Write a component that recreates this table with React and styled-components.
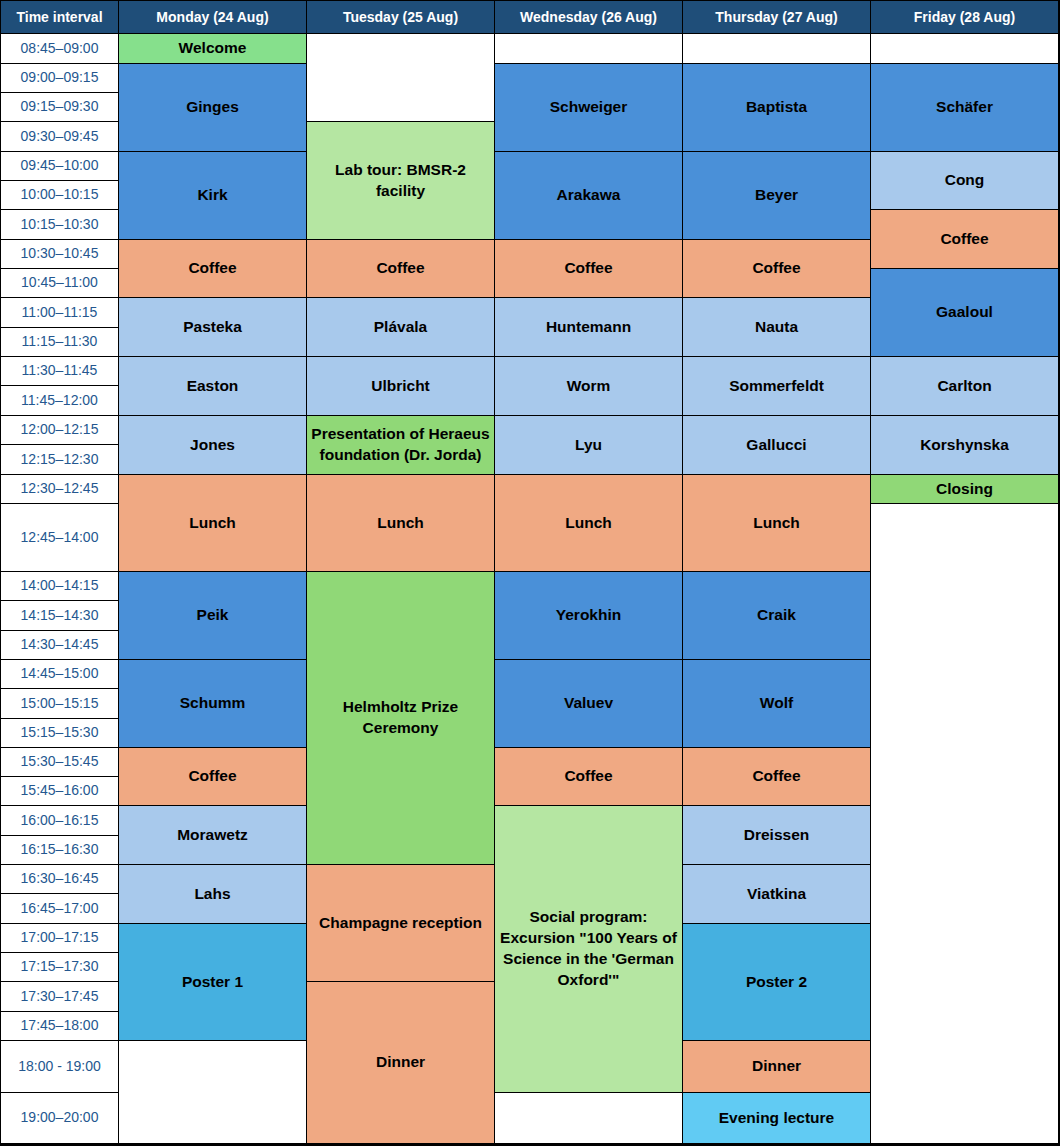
import React from 'react';
import styled, { createGlobalStyle } from 'styled-components';

const GlobalStyle = createGlobalStyle`
  html, body {
    margin: 0;
    padding: 0;
    background: #ffffff;
  }
  body {
    font-family: "Liberation Sans", Arial, sans-serif;
  }
`;

const tones = {
  empty: '#ffffff',
  welcome: '#86e08c',
  talk: '#4a90d8',
  short: '#a8c9ec',
  break: '#f0a983',
  event: '#90d877',
  social: '#b5e6a2',
  poster: '#45b0e0',
  lecture: '#61cbf3',
};

// y positions of the 1px horizontal rules, top to bottom
const rules = [
  0, 33, 63, 92, 121, 151, 180, 209, 239, 268, 297, 327, 356, 385, 415, 444,
  474, 503, 571, 600, 630, 659, 688, 718, 747, 776, 805, 835, 864, 893, 923,
  952, 981, 1011, 1040, 1092, 1143,
];
const rowTracks = rules
  .slice(1)
  .map((y, i) => `${y - rules[i] - 1}px`)
  .join(' ');

const times = [
  '08:45–09:00', '09:00–09:15', '09:15–09:30', '09:30–09:45', '09:45–10:00',
  '10:00–10:15', '10:15–10:30', '10:30–10:45', '10:45–11:00', '11:00–11:15',
  '11:15–11:30', '11:30–11:45', '11:45–12:00', '12:00–12:15', '12:15–12:30',
  '12:30–12:45', '12:45–14:00', '14:00–14:15', '14:15–14:30', '14:30–14:45',
  '14:45–15:00', '15:00–15:15', '15:15–15:30', '15:30–15:45', '15:45–16:00',
  '16:00–16:15', '16:15–16:30', '16:30–16:45', '16:45–17:00', '17:00–17:15',
  '17:15–17:30', '17:30–17:45', '17:45–18:00', '18:00 - 19:00', '19:00–20:00',
];

const days = [
  {
    title: 'Monday (24 Aug)',
    slots: [
      ['Welcome', 1, 'welcome'],
      ['Ginges', 3, 'talk'],
      ['Kirk', 3, 'talk'],
      ['Coffee', 2, 'break'],
      ['Pasteka', 2, 'short'],
      ['Easton', 2, 'short'],
      ['Jones', 2, 'short'],
      ['Lunch', 2, 'break'],
      ['Peik', 3, 'talk'],
      ['Schumm', 3, 'talk'],
      ['Coffee', 2, 'break'],
      ['Morawetz', 2, 'short'],
      ['Lahs', 2, 'short'],
      ['Poster 1', 4, 'poster'],
      ['', 2, 'empty'],
    ],
  },
  {
    title: 'Tuesday (25 Aug)',
    slots: [
      ['', 3, 'empty'],
      ['Lab tour: BMSR-2\nfacility', 4, 'social'],
      ['Coffee', 2, 'break'],
      ['Plávala', 2, 'short'],
      ['Ulbricht', 2, 'short'],
      ['Presentation of Heraeus\nfoundation (Dr. Jorda)', 2, 'event'],
      ['Lunch', 2, 'break'],
      ['Helmholtz Prize\nCeremony', 10, 'event'],
      ['Champagne reception', 4, 'break'],
      ['Dinner', 4, 'break'],
    ],
  },
  {
    title: 'Wednesday (26 Aug)',
    slots: [
      ['', 1, 'empty'],
      ['Schweiger', 3, 'talk'],
      ['Arakawa', 3, 'talk'],
      ['Coffee', 2, 'break'],
      ['Huntemann', 2, 'short'],
      ['Worm', 2, 'short'],
      ['Lyu', 2, 'short'],
      ['Lunch', 2, 'break'],
      ['Yerokhin', 3, 'talk'],
      ['Valuev', 3, 'talk'],
      ['Coffee', 2, 'break'],
      ['Social program:\nExcursion "100 Years of\nScience in the \'German\nOxford\'"', 9, 'social'],
      ['', 1, 'empty'],
    ],
  },
  {
    title: 'Thursday (27 Aug)',
    slots: [
      ['', 1, 'empty'],
      ['Baptista', 3, 'talk'],
      ['Beyer', 3, 'talk'],
      ['Coffee', 2, 'break'],
      ['Nauta', 2, 'short'],
      ['Sommerfeldt', 2, 'short'],
      ['Gallucci', 2, 'short'],
      ['Lunch', 2, 'break'],
      ['Craik', 3, 'talk'],
      ['Wolf', 3, 'talk'],
      ['Coffee', 2, 'break'],
      ['Dreissen', 2, 'short'],
      ['Viatkina', 2, 'short'],
      ['Poster 2', 4, 'poster'],
      ['Dinner', 1, 'break'],
      ['Evening lecture', 1, 'lecture'],
    ],
  },
  {
    title: 'Friday (28 Aug)',
    slots: [
      ['', 1, 'empty'],
      ['Schäfer', 3, 'talk'],
      ['Cong', 2, 'short'],
      ['Coffee', 2, 'break'],
      ['Gaaloul', 3, 'talk'],
      ['Carlton', 2, 'short'],
      ['Korshynska', 2, 'short'],
      ['Closing', 1, 'event'],
      ['', 19, 'empty'],
    ],
  },
];

const Timetable = styled.div`
  display: grid;
  grid-template-columns: 117px repeat(5, 187px);
  grid-template-rows: ${rowTracks};
  gap: 1px;
  padding: 1px 2px 3px 1px;
  width: 1060px;
  box-sizing: border-box;
  background: #000000;
`;

const HeaderCell = styled.div`
  display: flex;
  align-items: center;
  justify-content: center;
  background: #1f4e79;
  color: #ffffff;
  font-weight: bold;
  font-size: 14px;
  grid-row: 1;
`;

const TimeCell = styled.div`
  display: flex;
  align-items: center;
  justify-content: center;
  padding-bottom: 2px;
  background: #ffffff;
  color: #24578f;
  font-size: 14px;
  grid-column: 1;
  grid-row: ${(p) => p.$row};
`;

const Slot = styled.div`
  display: flex;
  align-items: center;
  justify-content: center;
  text-align: center;
  padding: 0 2px 2px;
  background: ${(p) => tones[p.$tone]};
  color: #000000;
  font-weight: bold;
  font-size: 15.5px;
  line-height: 21px;
  white-space: nowrap;
  grid-column: ${(p) => p.$col};
  grid-row: ${(p) => p.$row} / span ${(p) => p.$span};
`;

const Label = ({ text }) =>
  text.split('\n').map((line, i) => (
    <React.Fragment key={i}>
      {i > 0 && <br />}
      {line}
    </React.Fragment>
  ));

const App = () => {
  return (
    <>
      <GlobalStyle />
      <Timetable>
        <HeaderCell>Time interval</HeaderCell>
        {days.map((day) => (
          <HeaderCell key={day.title}>{day.title}</HeaderCell>
        ))}
        {times.map((t, i) => (
          <TimeCell key={t} $row={i + 2}>
            {t}
          </TimeCell>
        ))}
        {days.map((day, d) => {
          let row = 2;
          return day.slots.map(([text, span, tone], i) => {
            const cell = (
              <Slot key={`${d}-${i}`} $col={d + 2} $row={row} $span={span} $tone={tone}>
                <div>
                  <Label text={text} />
                </div>
              </Slot>
            );
            row += span;
            return cell;
          });
        })}
      </Timetable>
    </>
  );
};

export default App;
